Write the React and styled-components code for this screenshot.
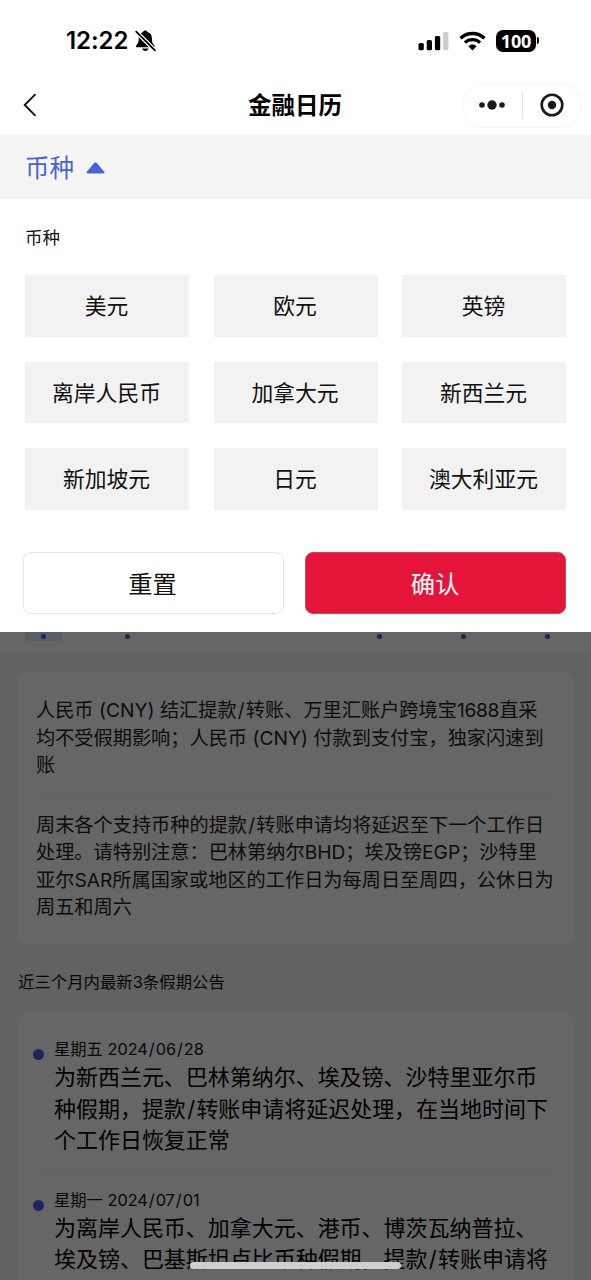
import React from "react";

import styled, { createGlobalStyle } from "styled-components";

const GlobalStyle = createGlobalStyle`

    * {
        box-sizing: border-box;
    }

    body {
        margin: 0;
        background: #ffffff;
        font-family: "Inter", "Noto Sans CJK SC", sans-serif;
        color: #1a1a1a;
    }
`;

const Screen = styled.div`

    position: relative;
    width: 591px;
    height: 1280px;
    overflow: hidden;

    display: flex;
    flex-direction: column;
`;

const StatusBar = styled.div`

    flex: none;
    height: 75px;
    padding: 6px 52px 0 66px;

    display: flex;
    align-items: center;
    justify-content: space-between;
`;

const StatusGroup = styled.div`

    display: flex;
    align-items: center;
    gap: ${props => props.$gap}px;
`;

const Clock = styled.span`

    width: 65px;

    font-size: 24px;
    font-weight: 600;
    letter-spacing: -0.05px;
    white-space: nowrap;
    color: #000000;
`;

const Battery = styled.div`

    display: flex;
    align-items: center;
    gap: 1px;
`;

const BatteryBody = styled.div`

    width: 40px;
    height: 22px;
    border-radius: 7px;

    background: #000000;
    color: #ffffff;

    font-family: "Open Sans", "Noto Sans", sans-serif;
    font-size: 18px;
    font-weight: 700;
    line-height: 22px;
    letter-spacing: -0.2px;
    text-align: center;
`;

const BatteryCap = styled.div`

    width: 2px;
    height: 7px;
    border-radius: 0 2px 2px 0;
    background: #000000;
`;

const NavBar = styled.div`

    flex: none;
    height: 60px;
    padding: 0 9px 0 22px;

    display: grid;
    grid-template-columns: 120px 1fr 120px;
    align-items: center;
`;

const NavTitle = styled.h1`

    margin: 2px 0 0 -14px;

    font-size: 23.5px;
    font-weight: 700;
    line-height: 32px;
    text-align: center;
    color: #000000;
`;

const Capsule = styled.div`

    width: 120px;
    height: 45px;
    border: 1px solid #f5f5f5;
    border-radius: 23px;

    display: flex;
    align-items: center;
`;

const CapsuleHalf = styled.div`

    flex: 1;
    height: 28px;

    display: flex;
    align-items: center;
    justify-content: center;

    & + & {
        border-left: 1px solid #e4e4e4;
    }
`;

const FilterBar = styled.div`

    flex: none;
    height: 64px;
    padding: 2px 25px 0;
    background: #f5f5f5;

    display: flex;
    align-items: center;
    gap: 12px;

    font-size: 24.5px;
    line-height: 32px;
    color: #4a60dc;
`;

const Sheet = styled.div`

    flex: none;
    height: 432.5px;
    padding: 26px 25px 0;
    background: #ffffff;
`;

const SheetLabel = styled.div`

    height: 50px;

    font-size: 17.5px;
    line-height: 26px;
    color: #111111;
`;

const ChipGrid = styled.div`

    display: grid;
    grid-template-columns: repeat(3, 164px);
    grid-auto-rows: 61.5px;
    column-gap: 24.5px;
    row-gap: 25px;
`;

const Chip = styled.div`

    padding: 0 1px 2px 0;
    background: #f2f2f2;

    display: flex;
    align-items: center;
    justify-content: center;

    font-size: 21.8px;
    color: #111111;
`;

const SheetActions = styled.div`

    margin: 42px 0 0 -2.5px;

    display: grid;
    grid-template-columns: 261px 261px;
    column-gap: 21.5px;
`;

const ActionButton = styled.button`

    height: 62px;
    padding: 0 1px 1px 0;
    border: 1px solid ${props => (props.$primary ? "#c84a52" : "#e6e6e6")};
    border-radius: 8px;

    background: ${props => (props.$primary ? "#e61439" : "#ffffff")};
    color: ${props => (props.$primary ? "#ffffff" : "#111111")};

    font-family: inherit;
    font-size: 24.3px;
`;

const Content = styled.div`

    position: relative;
    flex: 1;
    min-height: 0;
    overflow: hidden;
    background: #f4f4f4;
`;

const Mask = styled.div`

    position: absolute;
    inset: 0;
    background: rgba(0, 0, 0, 0.6);
`;

const CalendarStrip = styled.div`

    height: 22.5px;
    padding: 0 25px;
    background: #ffffff;

    display: grid;
    grid-template-columns: repeat(7, 84px);
`;

const CalendarDay = styled.div`

    width: 37px;
    height: 9.5px;
    border-radius: 0 0 2px 2px;
    background: ${props => (props.$active ? "#dbe8ff" : "transparent")};

    display: flex;
    align-items: center;
    justify-content: center;
`;

const Dot = styled.div`

    flex: none;
    width: ${props => props.$size}px;
    height: ${props => props.$size}px;
    border-radius: 50%;
    background: #4a60dc;
`;

const Card = styled.div`

    width: 555px;
    margin-left: 18px;
    padding: ${props => props.$top}px 18px 0;
    border-radius: 12px;
    background: #ffffff;
`;

const NoticeCard = styled(Card)`

    height: 273px;
    margin-top: 18px;
`;

const Notice = styled.div`

    font-size: 19.2px;
    line-height: 27.5px;
    color: #222222;

    & + & {
        margin-top: 14px;
        padding-top: 17px;
        border-top: 1px solid #eeeeee;
    }
`;

const Line = styled.div`

    white-space: nowrap;
`;

const Latin = styled.span`

    letter-spacing: ${props => props.$track || 0}px;
`;

const SlashMark = styled.span`

    margin: 0 0.06em;
`;

const SectionTitle = styled.div`

    height: 67px;
    padding: 24px 0 0 18px;

    font-size: 16.4px;
    line-height: 26px;
    color: #111111;
`;

const HolidayCard = styled(Card)`

    height: 420px;
`;

const Holiday = styled.div`

    display: grid;
    grid-template-columns: 18px 1fr;

    & + & {
        margin-top: 14px;
        padding-top: 16px;
        border-top: 1px solid #eeeeee;
    }
`;

const Marker = styled.div`

    margin: 12px 0 0 -3px;
`;

const HolidayDate = styled.div`

    font-size: 16.3px;
    line-height: 25px;
    color: #111111;
`;

const HolidayText = styled.div`

    font-size: 21.98px;
    line-height: 31.5px;
    color: #000000;
`;

const HomeIndicator = styled.div`

    position: absolute;
    left: 190px;
    bottom: 11px;
    width: 211px;
    height: 7px;
    border-radius: 4px;
    background: #cfcfcf;
`;

const currencies = [
    "美元", "欧元", "英镑",
    "离岸人民币", "加拿大元", "新西兰元",
    "新加坡元", "日元", "澳大利亚元",
];

// days of the visible week, marked when they hold a holiday
const week = [true, true, false, false, true, true, true];

const holidays = [
    {
        day: "星期五",
        date: "2024/06/28",
        lines: [
            "为新西兰元、巴林第纳尔、埃及镑、沙特里亚尔币",
            "种假期，提款/转账申请将延迟处理，在当地时间下",
            "个工作日恢复正常",
        ],
    },
    {
        day: "星期一",
        date: "2024/07/01",
        lines: [
            "为离岸人民币、加拿大元、港币、博茨瓦纳普拉、",
            "埃及镑、巴基斯坦卢比币种假期，提款/转账申请将",
        ],
    },
];

// give every slash a little room on both sides
function spaceSlashes(text)
{
    return text.split("/").map((part, index) => (
        <React.Fragment key={index}>
            {index > 0 && <SlashMark>/</SlashMark>}
            {part}
        </React.Fragment>
    ));
}

const BellOffIcon = () => (
    <svg width="21" height="22" viewBox="0 0 21 22">
        <path d="M10.300 .6c-1.100 0-1.900.6-2.200 1.400C5.200 2.900 3.700 5.300 3.700 8.300c0 3.900-.6 5.100-2.300 6.900-.9 1-.4 2.100.8 2.100h16.200c1.200 0 1.700-1.100.8-2.100-1.700-1.800-2.300-3-2.300-6.900 0-3-1.500-5.400-4.400-6.300-.3-.8-1.100-1.400-2.200-1.400z" fill="#000" />
        <path d="M7.100 18.600h6.400c-.4 1.600-1.600 2.500-3.200 2.500s-2.800-.9-3.200-2.500z" fill="#000" />
        <path d="M.2 .7L20.800 21.300" stroke="#fff" strokeWidth="4.200" />
        <path d="M1.200 1.700L19.900 20.400" stroke="#000" strokeWidth="1.800" strokeLinecap="round" />
    </svg>
);

const SignalIcon = () => (
    <svg width="31" height="20" viewBox="0 0 31 20">
        <rect x="0.500" y="12" width="5.300" height="7.300" rx="1.500" />
        <rect x="8.700" y="9" width="5.300" height="10.300" rx="1.500" />
        <rect x="16.900" y="5" width="5.300" height="14.300" rx="1.500" />
        <rect x="25.100" y="1" width="5.300" height="18.300" rx="1.500" fill="#cccccc" />
    </svg>
);

const WifiIcon = () => (
    <svg width="27" height="20" viewBox="0 0 27 20" fill="none" stroke="#000" strokeWidth="3.300">
        <path d="M1.500 7.200C8.200 .9 18.800 .9 25.500 7.200" />
        <path d="M5.900 11.600C10.200 7.700 16.800 7.700 21.100 11.600" />
        <path d="M9.300 15.200c2.400-2.200 6-2.200 8.400 0l-4.200 4.200z" fill="#000" stroke="none" />
    </svg>
);

const BackIcon = () => (
    <svg width="16" height="24" viewBox="0 0 16 24" fill="none" stroke="#111" strokeWidth="1.900">
        <path d="M13.500 1.200L2.700 12L13.500 22.800" />
    </svg>
);

const MoreIcon = () => (
    <svg width="28" height="12" viewBox="0 0 28 12" fill="#1a1a1a">
        <circle cx="4" cy="6" r="2.800" />
        <circle cx="14" cy="6" r="4.700" />
        <circle cx="24" cy="6" r="2.800" />
    </svg>
);

const CloseIcon = () => (
    <svg width="24" height="24" viewBox="0 0 24 24">
        <circle cx="12" cy="12" r="10.300" fill="none" stroke="#1a1a1a" strokeWidth="2.600" />
        <circle cx="12" cy="12" r="4.200" fill="#1a1a1a" />
    </svg>
);

const ArrowUpIcon = () => (
    <svg width="19" height="12" viewBox="0 0 19 12">
        <path d="M8.400 .7q1.100-.9 2.200 0l7.600 9q.9 1.800-.9 1.800H1.700q-1.800 0-.9-1.800z" fill="#4a60dc" />
    </svg>
);

const App = () => {

    return (
        <Screen>
            <GlobalStyle />

            <StatusBar>
                <StatusGroup $gap={4}>
                    <Clock>12:22</Clock>
                    <BellOffIcon />
                </StatusGroup>

                <StatusGroup $gap={10}>
                    <SignalIcon />
                    <WifiIcon />
                    <Battery>
                        <BatteryBody>100</BatteryBody>
                        <BatteryCap />
                    </Battery>
                </StatusGroup>
            </StatusBar>

            <NavBar>
                <BackIcon />
                <NavTitle>金融日历</NavTitle>
                <Capsule>
                    <CapsuleHalf><MoreIcon /></CapsuleHalf>
                    <CapsuleHalf><CloseIcon /></CapsuleHalf>
                </Capsule>
            </NavBar>

            <FilterBar>
                <span>币种</span>
                <ArrowUpIcon />
            </FilterBar>

            <Sheet>
                <SheetLabel>币种</SheetLabel>
                <ChipGrid>
                    {currencies.map(name => <Chip key={name}>{name}</Chip>)}
                </ChipGrid>
                <SheetActions>
                    <ActionButton>重置</ActionButton>
                    <ActionButton $primary>确认</ActionButton>
                </SheetActions>
            </Sheet>

            <Content>
                <CalendarStrip>
                    {week.map((marked, index) => (
                        <CalendarDay key={index} $active={index === 0}>
                            {marked && <Dot $size={4.5} />}
                        </CalendarDay>
                    ))}
                </CalendarStrip>

                <NoticeCard $top={25}>
                    <Notice>
                        <Line>人民币 <Latin>(CNY)</Latin> {spaceSlashes("结汇提款/转账、万里汇账户跨境宝")}<Latin $track={-0.3}>1688</Latin>直采</Line>
                        <Line>均不受假期影响；人民币 <Latin>(CNY)</Latin> 付款到支付宝，独家闪速到</Line>
                        <Line>账</Line>
                    </Notice>
                    <Notice>
                        <Line>{spaceSlashes("周末各个支持币种的提款/转账申请均将延迟至下一个工作日")}</Line>
                        <Line>处理。请特别注意：巴林第纳尔<Latin>BHD</Latin>；埃及镑<Latin>EGP</Latin>；沙特里</Line>
                        <Line>亚尔<Latin>SAR</Latin>所属国家或地区的工作日为每周日至周四，公休日为</Line>
                        <Line>周五和周六</Line>
                    </Notice>
                </NoticeCard>

                <SectionTitle>近三个月内最新3条假期公告</SectionTitle>

                <HolidayCard $top={25}>
                    {holidays.map(item => (
                        <Holiday key={item.date}>
                            <Marker><Dot $size={11} /></Marker>
                            <div>
                                <HolidayDate>{item.day} {spaceSlashes(item.date)}</HolidayDate>
                                <HolidayText>
                                    {item.lines.map(line => <Line key={line}>{spaceSlashes(line)}</Line>)}
                                </HolidayText>
                            </div>
                        </Holiday>
                    ))}
                </HolidayCard>

                <Mask />
            </Content>

            <HomeIndicator />
        </Screen>
    );
};

export default App;
